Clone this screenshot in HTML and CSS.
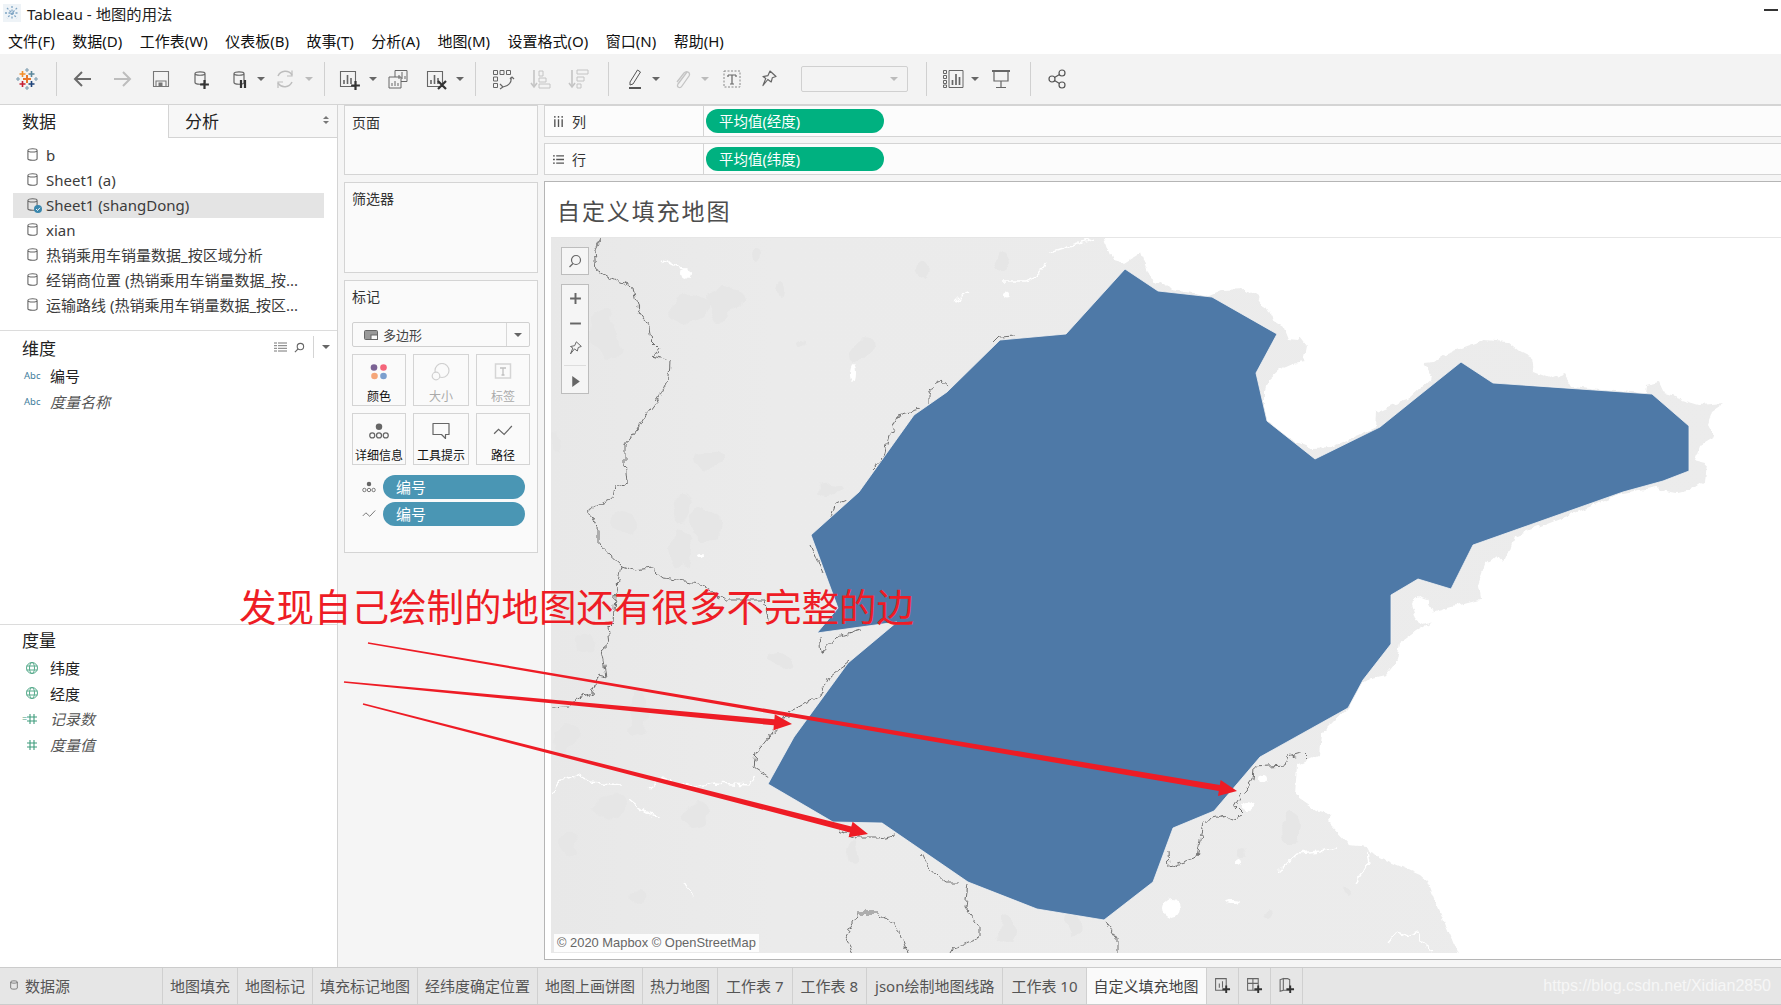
FILE: index.html
```html
<!DOCTYPE html>
<html lang="zh-CN">
<head>
<meta charset="utf-8">
<title>Tableau - 地图的用法</title>
<link rel="stylesheet" href="styles.css">
</head>
<body>
<svg class="defs" width="0" height="0" aria-hidden="true">
  <symbol id="db" viewBox="0 0 12 16"><path d="M1 3.500C1 1.200 11 1.200 11 3.500V12.500C11 14.800 1 14.800 1 12.500ZM1 3.500C1 5.800 11 5.800 11 3.500" fill="none" stroke="#666" stroke-width="1.200"/></symbol>
  <symbol id="bars" viewBox="0 0 24 24"><path d="M3.500 4.500h15v15h-15z" fill="none" stroke="#666" stroke-width="1.100"/><path d="M7 17v-4M10.500 17V8M14 17v-6" stroke="#666" stroke-width="1.600"/></symbol>
  <symbol id="dots" viewBox="0 0 16 14"><circle cx="8" cy="3.500" r="2.600" fill="#666"/><g fill="none" stroke="#666" stroke-width="1"><circle cx="2.600" cy="10.500" r="2"/><circle cx="8" cy="10.500" r="2"/><circle cx="13.400" cy="10.500" r="2"/></g></symbol>
  <symbol id="zig" viewBox="0 0 18 12"><path d="M1 8.500 5 4.500 10 9 17 1.500" fill="none" stroke="#666" stroke-width="1.100"/></symbol>
  <symbol id="pin" viewBox="0 0 16 18"><path d="M9 1 15 6.500 11.300 7.800 10.200 12 6.800 9.500 2 15.500 4.800 8.400 2 6.600 7 5.600Z" fill="none" stroke="#666" stroke-width="1.200" stroke-linejoin="round"/></symbol>
  <symbol id="globe" viewBox="0 0 14 14"><g fill="none" stroke="#57ab8c" stroke-width="1"><circle cx="7" cy="7" r="5.500"/><ellipse cx="7" cy="7" rx="2.500" ry="5.500"/><path d="M1.500 5h11M1.500 9h11"/></g></symbol>
  <symbol id="hash" viewBox="0 0 14 14"><path d="M5 2v10M9 2v10M2 5h10M2 9h10" fill="none" stroke="#3f9c7c" stroke-width="1.100"/></symbol>
  <symbol id="plus" viewBox="0 0 10 10"><path d="M5 1v8M1 5h8" stroke="#333" stroke-width="2"/></symbol>
</svg>

<div class="app">
  <header class="titlebar">
    <svg class="app-icon" viewBox="0 0 18 18"><rect width="18" height="18" fill="#eef3f7"/><path d="M9 2v14M2 9h14M4 4l10 10M14 4 4 14" stroke="#7fa5c4" stroke-width="1.300" stroke-dasharray="2 1.500"/></svg>
    <span>Tableau - 地图的用法</span>
    <i class="minimize"></i>
  </header>
  <nav class="menubar">
    <span>文件(F)</span><span>数据(D)</span><span>工作表(W)</span><span>仪表板(B)</span><span>故事(T)</span><span>分析(A)</span><span>地图(M)</span><span>设置格式(O)</span><span>窗口(N)</span><span>帮助(H)</span>
  </nav>

  <div class="toolbar">
    <svg class="tool" viewBox="0 0 24 24"><g fill="none" stroke-width="1.600">
      <path d="M12 8v8M8 12h8" stroke="#e8762b" stroke-width="2"/>
      <path d="M7.500 4v6M4.500 7h6" stroke="#f28e2b"/><path d="M16.500 4v6M13.500 7h6" stroke="#5b879b"/>
      <path d="M7.500 14v6M4.500 17h6" stroke="#c72035"/><path d="M16.500 14v6M13.500 17h6" stroke="#1f447a"/>
      <path d="M12 1v4M10 3h4M12 19v4M10 21h4M3 10v4M1 12h4M21 10v4M19 12h4" stroke="#7c9cb0" stroke-width="1.100"/></g></svg>
    <i class="sep m17"></i>
    <svg class="tool m14" viewBox="0 0 24 24"><path d="M20 12H5M11 5l-7 7 7 7" fill="none" stroke="#6b6b6b" stroke-width="2"/></svg>
    <svg class="tool m15" viewBox="0 0 24 24"><path d="M4 12h15M13 5l7 7-7 7" fill="none" stroke="#bdbdbd" stroke-width="2"/></svg>
    <svg class="tool m15" viewBox="0 0 24 24"><path d="M4.500 4.500h15v15h-15zM7 19.500V14h10v5.500" fill="none" stroke="#777" stroke-width="1.100"/><rect x="9.500" y="15.500" width="4" height="4" fill="#777"/></svg>
    <svg class="tool m15" viewBox="0 0 24 24"><use href="#db" x="6" y="3" width="12" height="16"/><use href="#plus" x="11" y="12" width="11" height="11"/></svg>
    <svg class="tool m15" viewBox="0 0 24 24"><use href="#db" x="6" y="3" width="12" height="16"/><path d="M14 13v8M18 13v8" stroke="#333" stroke-width="2.200"/></svg>
    <i class="tri m6"></i>
    <svg class="tool m8" viewBox="0 0 24 24"><path d="M5 9A8 8 0 0 1 19 8M19 15A8 8 0 0 1 5 16" fill="none" stroke="#bdbdbd" stroke-width="1.500"/><path d="M19 3.500V9h-5M5 21v-6h5" fill="none" stroke="#bdbdbd" stroke-width="1.200"/></svg>
    <i class="tri off m8"></i>
    <i class="sep m11"></i>
    <svg class="tool m12" viewBox="0 0 24 24"><use href="#bars" width="24" height="24"/><use href="#plus" x="13" y="13" width="11" height="11"/></svg>
    <i class="tri m8"></i>
    <svg class="tool m9" viewBox="0 0 24 24"><path d="M9 3.500h12v11H9z" fill="#f3f3f3" stroke="#666"/><path d="M3 10h12v11H3z" fill="#f3f3f3" stroke="#666"/><path d="M6 19v-3M9 19v-5M12 19v-3M13 12V8M16 12V5M19 12V9" stroke="#666"/></svg>
    <svg class="tool m14" viewBox="0 0 24 24"><use href="#bars" width="24" height="24"/><path d="M14 14l8 8M22 14l-8 8" stroke="#333" stroke-width="2.200"/></svg>
    <i class="tri m8"></i>
    <i class="sep m11"></i>
    <svg class="tool m15" viewBox="0 0 24 24"><g fill="none" stroke="#666"><path d="M2.500 3.500h4v4h-4zM9 3.500h4v4H9zM15.500 3.500h4v4h-4zM2.500 10h4v4h-4zM2.500 16.500h4v4h-4z"/><path d="M20 10c1 5-2 9-8 10M9 17l3 3-3 2M19 12l2-2 2 2" stroke-width="1.200"/></g></svg>
    <svg class="tool m14" viewBox="0 0 24 24"><g fill="none" stroke="#c4c4c4"><path d="M5 3v16" stroke-width="1.600"/><path d="M2 16l3 4 3-4" stroke-width="1.600"/><path d="M10 4h4v5h-4zM10 11h7v4h-7zM10 17h11v4H10z"/></g></svg>
    <svg class="tool m14" viewBox="0 0 24 24"><g fill="none" stroke="#c4c4c4"><path d="M5 3v16" stroke-width="1.600"/><path d="M2 16l3 4 3-4" stroke-width="1.600"/><path d="M10 3h11v4H10zM10 10h7v4h-7zM10 17h4v4h-4z"/></g></svg>
    <i class="sep m17"></i>
    <svg class="tool m14" viewBox="0 0 24 24"><path d="M7 15 14.500 3l3 2L10 17l-3 1z" fill="none" stroke="#555"/><path d="M6 21h12" stroke="#555" stroke-width="2"/></svg>
    <i class="tri m5"></i>
    <svg class="tool m10" viewBox="0 0 24 24"><path d="M17 5 8 17c-2 3 2 5 4 2l7-10c2-3-2-6-5-3L7 15" fill="none" stroke="#c4c4c4" stroke-width="1.300"/></svg>
    <i class="tri off m7"></i>
    <svg class="tool m11" viewBox="0 0 24 24"><rect x="4" y="4" width="16" height="16" fill="none" stroke="#888" stroke-dasharray="2 1.500"/><path d="M8 8h8M12 8v9M10 17h4M8 8v2M16 8v2" fill="none" stroke="#666" stroke-width="1.200"/></svg>
    <svg class="tool m13" viewBox="-4 -3 24 24"><use href="#pin" width="16" height="18"/></svg>
    <div class="tool-select m20"><i class="tri off"></i></div>
    <i class="sep m18"></i>
    <svg class="tool m14" viewBox="0 0 24 24"><g fill="none" stroke="#666"><path d="M2.500 3.500h3v3h-3zM2.500 8.500h3v3h-3zM2.500 13.500h3v3h-3zM2.500 18h3v2.500h-3zM8 3.500h14v17H8z"/><path d="M11.500 18v-5M15 18V7M18.500 18v-8" stroke-width="1.700"/></g></svg>
    <i class="tri m6"></i>
    <svg class="tool m10" viewBox="0 0 24 24"><path d="M3 4h18M5 4v10h14V4M12 14v6M7 20.500h10" fill="none" stroke="#666" stroke-width="1.200"/><path d="M3 4h18" stroke="#666" stroke-width="2"/></svg>
    <i class="sep m17"></i>
    <svg class="tool m14" viewBox="0 0 24 24"><g fill="#f3f3f3" stroke="#555" stroke-width="1.200"><path d="M7 12l10-6M7 12l10 6" fill="none"/><circle cx="7" cy="12" r="3"/><circle cx="17" cy="6" r="3"/><circle cx="17" cy="18" r="3"/></g></svg>
  </div>

  <div class="workspace">
    <aside class="sidebar">
      <div class="side-tabs">
        <div class="side-tab active">数据</div>
        <div class="side-tab">分析<span class="updown"><i></i><i></i></span></div>
      </div>
      <ul class="sources">
        <li><svg class="db"><use href="#db"/></svg><span>b</span></li>
        <li><svg class="db"><use href="#db"/></svg><span>Sheet1 (a)</span></li>
        <li class="selected"><span class="db-wrap"><svg class="db"><use href="#db"/></svg><svg class="check" viewBox="0 0 8 8"><circle cx="4" cy="4" r="4" fill="#3a87ad"/><path d="M2 4l1.500 1.500L6 2.800" fill="none" stroke="#fff" stroke-width=".9"/></svg></span><span>Sheet1 (shangDong)</span></li>
        <li><svg class="db"><use href="#db"/></svg><span>xian</span></li>
        <li><svg class="db"><use href="#db"/></svg><span>热销乘用车销量数据_按区域分析</span></li>
        <li><svg class="db"><use href="#db"/></svg><span>经销商位置 (热销乘用车销量数据_按...</span></li>
        <li><svg class="db"><use href="#db"/></svg><span>运输路线 (热销乘用车销量数据_按区...</span></li>
      </ul>
      <section class="fields dims">
        <div class="fields-head">
          <h3>维度</h3>
          <div class="head-tools">
            <svg viewBox="0 0 13 10" class="ht-list"><path d="M0 1h3M4 1h9M0 3.700h3M4 3.700h9M0 6.300h3M4 6.300h9M0 9h3M4 9h9" stroke="#777"/></svg>
            <svg viewBox="0 0 12 12" class="ht-search"><circle cx="7" cy="5" r="3.500" fill="none" stroke="#666" stroke-width="1.200"/><path d="M4.500 7.500 1 11" stroke="#666" stroke-width="1.300"/></svg>
            <i class="head-sep"></i>
            <i class="tri"></i>
          </div>
        </div>
        <div class="field"><span class="abc">Abc</span><span>编号</span></div>
        <div class="field calc"><span class="abc">Abc</span><span>度量名称</span></div>
      </section>
      <section class="fields measures">
        <div class="fields-head"><h3>度量</h3></div>
        <div class="field"><svg class="f-icon"><use href="#globe"/></svg><span>纬度</span></div>
        <div class="field"><svg class="f-icon"><use href="#globe"/></svg><span>经度</span></div>
        <div class="field calc"><span class="eq">=</span><svg class="f-icon"><use href="#hash"/></svg><span>记录数</span></div>
        <div class="field calc"><svg class="f-icon"><use href="#hash"/></svg><span>度量值</span></div>
      </section>
    </aside>

    <div class="cards">
      <section class="card pages"><h4>页面</h4></section>
      <section class="card filters"><h4>筛选器</h4></section>
      <section class="card marks">
        <h4>标记</h4>
        <div class="mark-type">
          <svg viewBox="0 0 14 10"><rect x=".5" y=".5" width="13" height="9" rx="1" fill="#999" stroke="#666"/><rect x="7" y="5" width="6.500" height="4.500" fill="#fafafa" stroke="#666"/></svg>
          <span>多边形</span>
          <b class="mark-arrow"><i class="tri"></i></b>
        </div>
        <div class="mark-grid">
          <div class="mark-btn"><svg viewBox="0 0 20 18"><circle cx="5" cy="4.500" r="3.300" fill="#7b6294"/><circle cx="14.500" cy="4.500" r="3.300" fill="#f4657a"/><circle cx="5.500" cy="13" r="3.300" fill="#f5a679"/><circle cx="14.500" cy="13" r="3.300" fill="#7b9fce"/></svg><span>颜色</span></div>
          <div class="mark-btn off"><svg viewBox="0 0 20 18"><circle cx="11" cy="7.500" r="7" fill="none" stroke="#d0d0d0" stroke-width="1.200"/><circle cx="5" cy="13" r="3.800" fill="#fafafa" stroke="#d0d0d0" stroke-width="1.200"/></svg><span>大小</span></div>
          <div class="mark-btn off"><svg viewBox="0 0 20 18"><rect x="2.500" y="1" width="15" height="14" fill="none" stroke="#d5d5d5" stroke-width="1.500"/><path d="M7 5h6M10 5v7M8.500 12h3" fill="none" stroke="#c0c0c0" stroke-width="1.300"/></svg><span>标签</span></div>
          <div class="mark-btn"><svg viewBox="0 0 16 14"><use href="#dots" width="16" height="14"/></svg><span>详细信息</span></div>
          <div class="mark-btn"><svg viewBox="0 0 20 18"><path d="M2 1.500h16v11h-3.500v4l-4-4H2z" fill="none" stroke="#666" stroke-width="1.200" stroke-linejoin="round"/></svg><span>工具提示</span></div>
          <div class="mark-btn"><svg viewBox="0 0 18 12"><use href="#zig" width="18" height="12"/></svg><span>路径</span></div>
        </div>
        <div class="mark-pill-row"><svg viewBox="0 0 16 14"><use href="#dots" width="16" height="14"/></svg><span class="pill blue">编号</span></div>
        <div class="mark-pill-row"><svg viewBox="0 0 18 12"><use href="#zig" width="18" height="12"/></svg><span class="pill blue">编号</span></div>
      </section>
    </div>

    <main class="stage">
      <div class="shelf">
        <div class="shelf-label"><svg viewBox="0 0 11 12"><path d="M1.500 0v2M1.500 3.500V12M5.500 0v2M5.500 3.500V12M9.500 0v2M9.500 3.500V12" stroke="#555" stroke-width="1.500"/></svg><span>列</span></div>
        <div class="shelf-body"><span class="pill green">平均值(经度)</span></div>
      </div>
      <div class="shelf">
        <div class="shelf-label"><svg viewBox="0 0 12 11"><path d="M0 1.500h2M3.500 1.500H12M0 5.500h2M3.500 5.500H12M0 9.500h2M3.500 9.500H12" stroke="#555" stroke-width="1.500"/></svg><span>行</span></div>
        <div class="shelf-body"><span class="pill green">平均值(纬度)</span></div>
      </div>
      <section class="viz">
        <h1 class="viz-title">自定义填充地图</h1>
        <div class="map">
          <svg class="map-svg" viewBox="551 238 1230 715" preserveAspectRatio="none">
            <defs>
              <linearGradient id="land" x1="0" x2="1" y1="0" y2="0"><stop offset="0" stop-color="#e8e8e8"/><stop offset=".18" stop-color="#ebebeb"/><stop offset="1" stop-color="#ececec"/></linearGradient>
              <filter id="blob" filterUnits="userSpaceOnUse" x="500" y="200" width="1350" height="800" color-interpolation-filters="sRGB"><feTurbulence type="fractalNoise" baseFrequency=".035" numOctaves="3" seed="5"/><feDisplacementMap in="SourceGraphic" scale="26" xChannelSelector="R" yChannelSelector="G"/></filter>
              <filter id="coast" filterUnits="userSpaceOnUse" x="500" y="200" width="1350" height="800" color-interpolation-filters="sRGB"><feTurbulence type="fractalNoise" baseFrequency=".09" numOctaves="3" seed="8"/><feDisplacementMap in="SourceGraphic" scale="7" xChannelSelector="R" yChannelSelector="G"/></filter>
              <filter id="line" filterUnits="userSpaceOnUse" x="500" y="200" width="1350" height="800" color-interpolation-filters="sRGB"><feTurbulence type="fractalNoise" baseFrequency=".14" numOctaves="2" seed="3"/><feDisplacementMap in="SourceGraphic" scale="8" xChannelSelector="R" yChannelSelector="G"/></filter>
            </defs>
            <rect x="551" y="238" width="1230" height="715" fill="url(#land)"/>
            <g fill="#e6e6e6" filter="url(#blob)">
              <ellipse cx="605" cy="332" rx="13" ry="25"/><ellipse cx="690" cy="305" rx="18" ry="13"/><ellipse cx="725" cy="303" rx="18" ry="16"/><ellipse cx="712" cy="460" rx="11" ry="12"/><ellipse cx="623" cy="525" rx="12" ry="14"/><ellipse cx="680" cy="510" rx="10" ry="16"/><ellipse cx="704" cy="525" rx="14" ry="18"/><ellipse cx="680" cy="550" rx="12" ry="18"/><ellipse cx="862" cy="352" rx="8" ry="10"/><ellipse cx="612" cy="808" rx="16" ry="15"/><ellipse cx="640" cy="713" rx="9" ry="20"/><ellipse cx="780" cy="660" rx="13" ry="10"/><ellipse cx="696" cy="812" rx="11" ry="11"/><ellipse cx="1005" cy="262" rx="9" ry="12"/><ellipse cx="1293" cy="828" rx="10" ry="12"/><ellipse cx="1005" cy="930" rx="8" ry="14"/><ellipse cx="853" cy="855" rx="6" ry="9"/><ellipse cx="636" cy="900" rx="7" ry="8"/><ellipse cx="585" cy="640" rx="9" ry="9"/><ellipse cx="565" cy="735" rx="12" ry="14"/><ellipse cx="572" cy="845" rx="9" ry="11"/><ellipse cx="1245" cy="850" rx="5" ry="6"/><ellipse cx="1344" cy="892" rx="5" ry="5"/><ellipse cx="760" cy="260" rx="5" ry="5"/><ellipse cx="778" cy="290" rx="5" ry="8"/><ellipse cx="800" cy="345" rx="4" ry="4"/><ellipse cx="830" cy="490" rx="8" ry="6"/><ellipse cx="560" cy="440" rx="6" ry="10"/><ellipse cx="922" cy="270" rx="8" ry="10"/><ellipse cx="1265" cy="915" rx="5" ry="5"/><ellipse cx="1070" cy="920" rx="6" ry="10"/></g>
            <path fill="#fff" filter="url(#coast)" d="M1105 238 1109 250 1113 260 1120 262 1125 263 1133 258 1141 253 1144 262 1150 278 1156 283 1162 282 1170 290 1210 295 1222 290 1246 289 1258 297 1267 310 1272 320 1283 327 1288 340 1298 341 1300 338 1307 347 1304 362 1293 364 1279 370 1268 380 1265 390 1265 420 1280 433 1290 440 1299 443 1311 448 1331 447 1360 435 1375 428 1376 412 1392 405 1407 400 1420 388 1432 377 1424 363 1435 362 1448 353 1470 345 1484 340 1508 342 1520 352 1532 358 1534 372 1550 378 1564 373 1572 387 1600 390 1645 393 1646 386 1659 383 1664 394 1680 399 1700 405 1725 403 1712 412 1708 424 1715 437 1700 446 1695 460 1707 463 1705 480 1690 490 1677 493 1660 490 1657 487 1623 493 1570 515 1514 537 1510 550 1504 563 1497 555 1485 565 1478 585 1480 600 1460 605 1434 612 1428 600 1418 597 1411 603 1415 615 1422 625 1432 622 1415 632 1400 643 1397 660 1385 675 1372 678 1360 685 1352 700 1347 710 1337 718 1322 733 1320 755 1297 765 1295 795 1317 810 1332 815 1328 822 1350 845 1367 847 1370 853 1420 875 1428 882 1457 953 1470 990 1820 990 1820 200 1100 200Z"/>
            <g fill="none" stroke="#fff" stroke-width="1.400" filter="url(#line)">
              <path d="M552 793 560 780 577 775 590 782 622 785M649 788 664 778 680 785 694 787 715 783 749 785 756 773"/>
              <path d="M630 800 645 812 659 817M684 882 694 898M663 260 675 266 686 270M955 302 962 295 969 292M1003 282 1026 282 1038 275 1046 262M1050 252 1094 238M1278 872 1298 853 1320 851 1337 848M1355 883 1370 863 1368 853M1388 943 1397 932 1408 936 1417 933 1422 943 1432 950"/>
            </g>
            <g fill="#fff" filter="url(#coast)"><ellipse cx="686" cy="273" rx="4" ry="6"/><ellipse cx="853" cy="373" rx="3" ry="10"/><ellipse cx="1007" cy="295" rx="3" ry="2.500"/><ellipse cx="1247" cy="806" rx="8" ry="4"/><ellipse cx="1172" cy="908" rx="9" ry="10"/><ellipse cx="1263" cy="779" rx="4" ry="4"/><ellipse cx="1237" cy="862" rx="3" ry="4"/><ellipse cx="1232" cy="902" rx="7" ry="2"/><ellipse cx="700" cy="556" rx="3" ry="2"/></g>
            <g fill="none" stroke="#707070" stroke-width="1" filter="url(#line)">
              <path d="M601 238 595 250 597 270 609 277 633 287 635 298 639 313 649 327 651 340 659 348 653 356 670 361 669 377 659 397 647 413 637 430 625 445 625 463 627 483 615 487 613 497 587 510 599 530 599 545 621 565 615 597 613 622 608 627 610 643 602 650 607 677 598 675 592 693 577 698 567 707 552 708"/>
              <path d="M621 565 635 570 651 568 663 578 698 583 726 600 765 600 769 620"/>
              <path d="M861 630 838 637 821 653 819 637M848 662 829 677 821 695 789 712 769 737 756 753 754 767 769 777"/>
              <path d="M838 830 858 838 878 838 896 835M921 853 928 867 945 882 960 882M968 883 965 907 980 927 980 938 953 948 950 953M853 953 844 937 858 913 878 913 898 927 908 953M1105 922 1117 940 1117 953"/>
              <path d="M1168 853 1169 867 1197 858 1202 828 1212 817 1220 815 1232 820 1243 815 1235 807 1242 795 1253 780 1254 767 1285 765 1288 757 1302 753 1307 758"/>
              <path d="M993 343 999 337 1016 336M949 387 941 380 935 383 929 393 929 402M920 409 898 415 888 440 884 457 872 470M846 500 835 505 831 517M811 545 823 573"/>
            </g>
            <path fill="#4e79a7" stroke="#f4f4f4" stroke-width=".8" d="M1125 269 1158 291 1212 297 1277 334 1256 373 1267 421 1315 459 1380 427 1416 398 1461 362 1493 383 1652 394 1689 426 1689 471 1663 481 1623 492 1473 545 1451 589 1418 579 1391 595 1391 644 1363 680 1348 708 1260 757 1214 811 1173 828 1153 882 1104 920 1037 909 968 882 882 823 833 822 768 784 794 737 848 663 897 622 817 633 838 608 811 535 859 492 914 415 947 392 1000 340 1066 334Z"/>
          </svg>
          <div class="map-controls">
            <div class="map-btn-group">
              <svg class="map-search" viewBox="0 0 14 14"><circle cx="8" cy="6" r="4.500" fill="none" stroke="#666" stroke-width="1.200"/><path d="M5 9.500 1.500 13" stroke="#666" stroke-width="1.300"/></svg>
            </div>
            <div class="map-btn-group stack">
              <svg viewBox="0 0 12 12"><path d="M6 1v10M1 6h10" stroke="#666" stroke-width="1.800"/></svg>
              <svg viewBox="0 0 12 12"><path d="M1 6h10" stroke="#666" stroke-width="1.800"/></svg>
              <svg viewBox="0 0 16 18"><use href="#pin" width="16" height="18"/></svg>
              <i class="map-rule"></i>
              <svg viewBox="0 0 12 12"><path d="M3 1v10l7-5z" fill="#666"/></svg>
            </div>
          </div>
          <div class="attribution">© 2020 Mapbox © OpenStreetMap</div>
        </div>
      </section>
    </main>
  </div>

  <footer class="tabbar">
    <div class="tab source"><svg class="db small"><use href="#db"/></svg>数据源</div>
    <div class="tab">地图填充</div>
    <div class="tab">地图标记</div>
    <div class="tab">填充标记地图</div>
    <div class="tab">经纬度确定位置</div>
    <div class="tab">地图上画饼图</div>
    <div class="tab">热力地图</div>
    <div class="tab wide">工作表 7</div>
    <div class="tab wide">工作表 8</div>
    <div class="tab wide">json绘制地图线路</div>
    <div class="tab wide">工作表 10</div>
    <div class="tab active">自定义填充地图</div>
    <div class="tab add"><svg viewBox="0 0 16 16"><path d="M1.500 1.500h10v11h-10z" fill="none" stroke="#666"/><path d="M5 10V6M8 10V4" stroke="#666"/><use href="#plus" x="7" y="7" width="9" height="9"/></svg></div>
    <div class="tab add"><svg viewBox="0 0 16 16"><path d="M1.500 1.500h10v11h-10zM1.500 6h10M6.500 1.500v11" fill="none" stroke="#666"/><use href="#plus" x="7" y="7" width="9" height="9"/></svg></div>
    <div class="tab add"><svg viewBox="0 0 16 16"><path d="M2 2.500 5 1.500v11L2 13.500zM5 1.500h4l2 1v10H5" fill="none" stroke="#666"/><use href="#plus" x="7" y="7" width="9" height="9"/></svg></div>
    <div class="watermark">https://blog.csdn.net/Xidian2850</div>
  </footer>

  <svg class="arrows" viewBox="0 0 1781 1005" aria-hidden="true">
    <polygon points="368,642.300 1219.800,785 1220.600,780.100 1237,791 1218,795.900 1218.800,791 367.900,643.700"/>
    <polygon points="344.100,681.300 774.400,719.300 774.800,714.300 792,724 773.400,730.300 773.800,725.300 343.900,682.700"/>
    <polygon points="363.200,703.300 851.300,826.600 852.600,821.800 868,834 848.600,837.200 849.900,832.400 362.800,704.700"/>
  </svg>
  <div class="annotation">发现自己绘制的地图还有很多不完整的边</div>
</div>
</body>
</html>
```
FILE: styles.css
```css
* { box-sizing: border-box; }
html, body { margin: 0; padding: 0; }
body {
  width: 1781px;
  height: 1005px;
  overflow: hidden;
  background: #fff;
  color: #333;
  font-family: "Noto Sans", "Noto Sans CJK SC", sans-serif;
  font-size: 15px;
}
ul { list-style: none; margin: 0; padding: 0; }
h1, h3, h4 { margin: 0; font-weight: 400; }
i { display: block; }
.defs { position: absolute; }
.app { position: relative; width: 1781px; height: 1005px; display: flex; flex-direction: column; }

.titlebar { height: 27px; padding-bottom: 1px; display: flex; align-items: center; padding-left: 3px; font-size: 15.300px; color: #222; }
.app-icon { width: 18px; height: 18px; margin-right: 6px; }
.minimize { width: 14px; height: 1.500px; background: #333; margin-left: auto; margin-right: 3px; margin-bottom: 6px; }

.menubar { height: 27px; display: flex; align-items: center; gap: 17.500px; padding-left: 8px; font-size: 15px; color: #111; }

.toolbar { height: 51px; background: #f3f3f3; border-bottom: 1px solid #d4d4d4; display: flex; align-items: center; padding-left: 15px; padding-bottom: 1px; flex: none; }
.tool { width: 24px; height: 24px; flex: none; }
.sep { width: 1px; height: 34px; background: #d0d0d0; flex: none; }
.tri { width: 0; height: 0; flex: none; border-left: 4px solid transparent; border-right: 4px solid transparent; border-top: 4px solid #666; }
.tri.off { border-top-color: #bbb; }
.tool-select { width: 107px; height: 26px; border: 1px solid #d0d0d0; border-radius: 2px; background: #f3f3f3; flex: none; display: flex; align-items: center; justify-content: flex-end; padding-right: 9px; }
.m5 { margin-left: 5px; } .m6 { margin-left: 6px; } .m7 { margin-left: 7px; } .m8 { margin-left: 8px; }
.m9 { margin-left: 9px; } .m10 { margin-left: 10px; } .m11 { margin-left: 11px; } .m12 { margin-left: 12px; }
.m13 { margin-left: 13px; } .m14 { margin-left: 14px; } .m15 { margin-left: 15px; } .m17 { margin-left: 17px; }
.m18 { margin-left: 18px; } .m20 { margin-left: 20px; }

.workspace { flex: 1; display: flex; min-height: 0; }

.sidebar { width: 338px; flex: none; background: #fff; border-right: 1px solid #d4d4d4; display: flex; flex-direction: column; }
.side-tabs { height: 33px; display: flex; flex: none; }
.side-tab { width: 168px; padding-left: 22px; font-size: 17px; line-height: 34px; color: #222; background: #fff; }
.side-tab + .side-tab { width: 169px; padding-left: 16px; background: #f7f7f7; border-left: 1px solid #d4d4d4; border-bottom: 1px solid #d4d4d4; position: relative; }
.updown { position: absolute; right: 8px; top: 11px; display: flex; flex-direction: column; gap: 2px; }
.updown i { width: 0; height: 0; border-left: 3px solid transparent; border-right: 3px solid transparent; border-bottom: 3.500px solid #777; }
.updown i + i { border-bottom: 0; border-top: 3.500px solid #777; }

.sources { height: 192px; padding: 5px 13px 0; flex: none; }
.sources li { height: 25px; padding-bottom: 2px; display: flex; align-items: center; padding-left: 14px; gap: 8px; white-space: nowrap; color: #3c3c3c; font-size: 15px; }
.sources li.selected { background: #e4e4e4; }
.db { width: 11px; height: 15px; flex: none; }
.db-wrap { position: relative; display: flex; }
.check { position: absolute; right: -4px; bottom: -1px; width: 8px; height: 8px; }

.fields { border-top: 1px solid #dcdcdc; flex: none; }
.dims { height: 294px; }
.measures { flex: 1; }
.fields-head { height: 32px; padding: 0 7px 0 22px; display: flex; align-items: center; justify-content: space-between; }
.measures .fields-head { height: 28px; margin-bottom: 2px; }
.fields-head h3 { font-size: 17px; color: #222; }
.head-tools { display: flex; align-items: center; }
.ht-list { width: 13px; height: 10px; }
.ht-search { width: 11px; height: 11px; margin-left: 7px; }
.head-sep { width: 1px; height: 22px; background: #d4d4d4; margin: 0 8px 0 8px; }
.field { height: 25.600px; padding-left: 50px; display: flex; align-items: center; position: relative; color: #222; font-size: 15px; }
.field.calc { font-style: italic; color: #555; }
.abc { position: absolute; left: 24px; font-size: 9.500px; font-style: normal; color: #3f7d9c; }
.f-icon { position: absolute; left: 25px; width: 14px; height: 14px; }
.eq { position: absolute; left: 22px; font-size: 9px; font-style: normal; color: #3f9c7c; }

.cards { width: 206px; flex: none; background: #f5f5f5; padding: 0 6px; display: flex; flex-direction: column; gap: 7px; }
.card { background: #fafafa; border: 1px solid #d4d4d4; padding: 0 7px; flex: none; }
.card h4 { font-size: 14px; line-height: 20px; color: #333; }
.pages { height: 70px; padding-top: 7px; margin-bottom: 0; }
.filters { height: 91px; padding-top: 6px; }
.marks { height: 273px; padding-top: 6px; }
.mark-type { height: 25px; margin-top: 15px; border: 1px solid #d0d0d0; border-radius: 2px; background: #fafafa; display: flex; align-items: center; padding-left: 11px; font-size: 13px; color: #444; }
.mark-type svg { width: 14px; height: 10px; margin-right: 5px; }
.mark-arrow { margin-left: auto; width: 23px; height: 100%; border-left: 1px solid #d8d8d8; display: flex; align-items: center; justify-content: center; }
.mark-grid { display: grid; grid-template-columns: 54px 56px 54px; gap: 7px; margin-top: 7px; }
.mark-btn { height: 52px; border: 1px solid #d4d4d4; background: #fafafa; display: flex; flex-direction: column; align-items: center; font-size: 12px; line-height: 16px; color: #111; padding-top: 8px; }
.mark-btn svg { width: 20px; height: 18px; margin-bottom: 8px; }
.mark-btn.off { color: #aaa; }
.mark-pill-row { display: flex; align-items: center; margin-top: 3px; padding-left: 10px; }
.mark-grid + .mark-pill-row { margin-top: 10px; }
.mark-pill-row svg { width: 14px; height: 12px; margin-right: 7px; flex: none; }
.pill { height: 24px; border-radius: 12px; color: #fff; font-size: 15px; line-height: 24px; display: block; }
.pill.blue { width: 142px; background: #4a96b4; padding-left: 13px; }
.pill.green { width: 178px; background: #00b180; padding-left: 13px; font-size: 14.500px; }

.stage { flex: 1; min-width: 0; background: #f5f5f5; display: flex; flex-direction: column; }
.shelf { height: 32px; margin-bottom: 6px; background: #fcfcfc; border: 1px solid #d4d4d4; border-right: 0; display: flex; align-items: center; flex: none; }
.shelf-label { width: 159px; height: 100%; border-right: 1px solid #d4d4d4; display: flex; align-items: center; padding-left: 8px; gap: 8px; font-size: 14px; color: #333; flex: none; }
.shelf-label svg { width: 11px; height: 11px; }
.shelf-body { padding-left: 2px; }

.viz { flex: 1; min-height: 0; background: #fff; border: 1px solid #b5b5b5; border-right: 0; display: flex; flex-direction: column; padding: 0 0 6px 6px; margin-bottom: 7px; }
.viz-title { height: 56px; flex: none; font-size: 23px; letter-spacing: 1.900px; line-height: 58px; padding-left: 6px; color: #4d4d4d; border-bottom: 1px solid #e6e6e6; }
.map { position: relative; flex: 1; min-height: 0; overflow: hidden; }
.map-svg { display: block; width: 100%; height: 100%; }
.map-controls { position: absolute; left: 10px; top: 9px; display: flex; flex-direction: column; gap: 9px; }
.map-btn-group { width: 28px; background: #f5f5f5; border: 1px solid #bdbdbd; display: flex; flex-direction: column; align-items: center; }
.map-search { width: 14px; height: 14px; margin: 6px 0; }
.stack { height: 110px; padding-top: 7px; gap: 12px; }
.stack svg { width: 13px; height: 13px; flex: none; }
.stack svg:nth-of-type(3) { width: 15px; height: 15px; margin: -1px 0; }
.map-rule { width: 22px; height: 1px; background: #ddd; margin: -2px 0 -3px; }
.attribution { position: absolute; left: 3px; bottom: 1px; height: 18px; padding: 0 3px; background: rgba(255,255,255,.85); font-family: "Liberation Sans", sans-serif; font-size: 12.900px; line-height: 18px; color: #666; white-space: nowrap; }

.tabbar { height: 38px; flex: none; background: #e6e6e6; border-top: 1px solid #ccc; border-bottom: 1px solid #ccc; display: flex; align-items: stretch; }
.tab { padding: 0 7px 2px; display: flex; align-items: center; border-right: 1px solid #d0d0d0; color: #555; font-size: 15px; white-space: nowrap; }
.tab.wide { padding: 0 8px 2px; }
.tab.source { width: 163px; padding-left: 10px; gap: 7px; }
.db.small { width: 8px; height: 12px; }
.tab.active { background: #fafafa; color: #444; }
.tab.add { width: 32px; padding: 0 6px 2px; justify-content: center; }
.tab.add svg { width: 17px; height: 17px; flex: none; }
.watermark { margin-left: auto; padding-right: 10px; align-self: center; font-family: "Liberation Sans", sans-serif; font-size: 16px; color: #f6f6f6; }

.arrows { position: absolute; left: 0; top: 0; width: 1781px; height: 1005px; pointer-events: none; fill: #ee1c25; }
.annotation { position: absolute; left: 239px; top: 581px; font-family: "Noto Sans CJK SC", sans-serif; font-size: 37.500px; line-height: 48px; color: #ee1c25; white-space: nowrap; }
```
